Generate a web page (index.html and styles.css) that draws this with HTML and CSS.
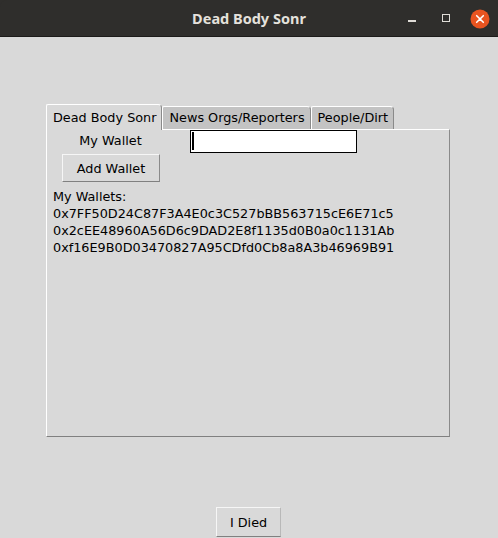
FILE: index.html
```html
<!DOCTYPE html>
<html>
<head>
<meta charset="utf-8">
<link rel="stylesheet" href="styles.css">
</head>
<body>
<div class="window">
  <div class="titlebar">
    <div class="title">Dead Body Sonr</div>
    <div class="controls">
      <span class="ctl min"><span class="min-line"></span></span>
      <span class="ctl max"><span class="max-box"></span></span>
      <span class="ctl close">
        <svg width="20" height="20" viewBox="0 0 20 20"><circle cx="10" cy="10" r="9.5" fill="#e95420"/><path d="M6.7 6.7 L13.3 13.3 M13.3 6.7 L6.7 13.3" stroke="#ffffff" stroke-width="1.6" stroke-linecap="round"/></svg>
      </span>
    </div>
  </div>
  <div class="content">
    <div class="notebook">
      <div class="tabs">
        <div class="tab selected">Dead Body Sonr</div>
        <div class="tab">News Orgs/Reporters</div>
        <div class="tab">People/Dirt</div>
      </div>
      <div class="pane">
        <div class="row">
          <div class="label">My Wallet</div>
          <div class="entry"><span class="cursor"></span></div>
        </div>
        <div class="row2">
          <div class="btn add">Add Wallet</div>
        </div>
        <div class="wallets">
          <div>My Wallets:</div>
          <div>0x7FF50D24C87F3A4E0c3C527bBB563715cE6E71c5</div>
          <div>0x2cEE48960A56D6c9DAD2E8f1135d0B0a0c1131Ab</div>
          <div>0xf16E9B0D03470827A95CDfd0Cb8a8A3b46969B91</div>
        </div>
      </div>
    </div>
    <div class="bottom">
      <div class="btn died">I Died</div>
    </div>
  </div>
</div>
</body>
</html>
```

FILE: styles.css
```css
html, body {
  margin: 0;
  padding: 0;
  background: #2f2e2c;
}
body {
  width: 498px;
  height: 538px;
  overflow: hidden;
  font-family: "DejaVu Sans", sans-serif;
  font-size: 12.8px;
  color: #000000;
}
.window {
  width: 498px;
  height: 538px;
  display: flex;
  flex-direction: column;
}
.titlebar {
  height: 36px;
  background: #2f2e2c;
  border-bottom: 1px solid #1c1b1a;
  border-radius: 7px 7px 0 0;
  display: flex;
  align-items: center;
  justify-content: center;
  position: relative;
}
.title {
  font-family: "Noto Sans", "DejaVu Sans", sans-serif;
  font-weight: bold;
  font-size: 14.5px;
  color: #e4e1dc;
  margin-top: -1px;
}
.controls {
  position: absolute;
  right: 0;
  top: 0;
  height: 36px;
  display: flex;
  align-items: center;
}
.ctl {
  display: flex;
  align-items: center;
  justify-content: center;
}
.min {
  width: 8px;
  height: 8px;
  margin-right: 26px;
  align-items: flex-end;
  margin-top: -1px;
}
.min-line {
  display: block;
  width: 8px;
  height: 1.5px;
  background: #e0ddd8;
}
.max {
  margin-right: 20px;
}
.max-box {
  display: block;
  width: 6.5px;
  height: 6.5px;
  border: 1.3px solid #e0ddd8;
}
.close {
  margin-right: 8px;
  margin-top: 1px;
  width: 20px;
  height: 20px;
}
.content {
  flex: 1;
  background: #d9d9d9;
  display: flex;
  flex-direction: column;
}
.notebook {
  margin-top: 67px;
  margin-left: 46px;
  width: 404px;
}
.tabs {
  display: flex;
  align-items: flex-end;
  height: 25px;
  position: relative;
  z-index: 1;
}
.tab {
  line-height: 17px;
  padding: 2px 5px 3px 6px;
  background: #c3c3c3;
  border-top: 1px solid #ffffff;
  border-left: 1px solid #ffffff;
  border-right: 1px solid #8a8a8a;
  border-radius: 2px 4px 0 0;
  white-space: nowrap;
}
.tab.selected {
  background: #d9d9d9;
  padding-top: 4px;
  padding-bottom: 4px;
  margin-bottom: -1px;
}
.pane {
  height: 306px;
  border-top: 1px solid #ffffff;
  border-left: 1px solid #ffffff;
  border-right: 1px solid #8a8a8a;
  border-bottom: 1px solid #808080;
  background: #d9d9d9;
  display: flex;
  flex-direction: column;
}
.row {
  display: flex;
  align-items: flex-start;
}
.label {
  width: 113px;
  margin-left: 7px;
  text-align: center;
  line-height: 17px;
  margin-top: 2px;
}
.entry {
  margin-left: 23px;
  border: 1px solid #000000;
  background: #ffffff;
  display: flex;
  align-items: stretch;
  padding: 1px 0 2px 1px;
  box-sizing: border-box;
  height: 23px;
  width: 167px;
}
.cursor {
  display: block;
  width: 2px;
  background: #000000;
}
.row2 {
  display: flex;
  padding-top: 1px;
}
.btn {
  box-sizing: border-box;
  border-top: 1px solid #f6f6f6;
  border-left: 1px solid #f6f6f6;
  border-right: 1px solid #8a8a8a;
  border-bottom: 1px solid #808080;
  display: flex;
  align-items: center;
  justify-content: center;
  line-height: 17px;
  background: #d9d9d9;
}
.add {
  margin-left: 15px;
  width: 98px;
  height: 28px;
}
.wallets {
  margin-top: 6px;
  margin-left: 6px;
  line-height: 17px;
  white-space: nowrap;
}
.bottom {
  display: flex;
  margin-top: 70px;
}
.died {
  margin-left: 216px;
  width: 65px;
  height: 30px;
  border-right-color: #b8b8b8;
}
```
